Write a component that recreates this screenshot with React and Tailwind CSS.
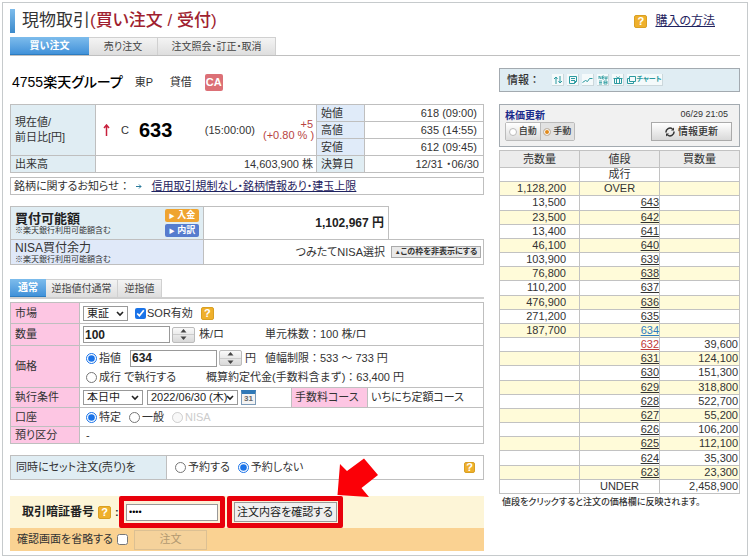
import React from "react";

const sells = [
  ["13,500", "643"],
  ["23,500", "642"],
  ["13,400", "641"],
  ["46,100", "640"],
  ["103,900", "639"],
  ["76,800", "638"],
  ["110,200", "637"],
  ["476,900", "636"],
  ["271,200", "635"],
  ["187,700", "634"],
];

const buys = [
  ["39,600", "632"],
  ["124,100", "631"],
  ["151,300", "630"],
  ["318,800", "629"],
  ["522,700", "628"],
  ["55,200", "627"],
  ["106,200", "626"],
  ["112,100", "625"],
  ["35,300", "624"],
  ["23,300", "623"],
];

const board = [
  { sell: "1,128,200", label: "OVER" },
  ...sells.map(([sell, price]) => ({ sell, price })),
  ...buys.map(([buy, price]) => ({ buy, price })),
  { label: "UNDER", buy: "2,458,900" },
];

function Help({ className = "h-[13px] w-[13px]" }) {
  return (
    <button
      type="button"
      aria-label="ヘルプ"
      className={`${className} flex shrink-0 items-center justify-center rounded-[2px] border border-[#d9a023] bg-[#efb02c] text-[11px] leading-none font-bold text-white`}
    >
      ?
    </button>
  );
}

function Tabs({ items, className = "" }) {
  return (
    <nav className={`flex text-[10px] ${className}`}>
      {items.map(([text, width], i) => (
        <a
          key={text}
          href="#"
          className={
            i === 0
              ? `${width} flex items-center justify-center border-b border-[#2c7cc0] bg-linear-to-b from-[#7dbcec] to-[#4192d9] font-bold text-white`
              : `${width} flex items-center justify-center border-t border-r border-[#d0d0d0] bg-linear-to-b from-[#f4f4f4] to-[#dedede] text-[#444]`
          }
        >
          {text}
        </a>
      ))}
    </nav>
  );
}

function Stepper({ name }) {
  return (
    <span className="flex h-4 w-[23px] shrink-0 flex-col overflow-hidden rounded-[2px] border border-[#bbb] bg-linear-to-b from-[#fafafa] to-[#d8d8d8]">
      <button type="button" aria-label={`${name}を増やす`} className="flex flex-1 items-center justify-center border-b border-[#ccc]">
        <svg width="7" height="4" viewBox="0 0 7 4"><path d="M3.5 0L6.5 3.5H.5z" fill="#444" /></svg>
      </button>
      <button type="button" aria-label={`${name}を減らす`} className="flex flex-1 items-center justify-center">
        <svg width="7" height="4" viewBox="0 0 7 4"><path d="M3.5 4L6.5 .5H.5z" fill="#444" /></svg>
      </button>
    </span>
  );
}

function Select({ id, label, option, className }) {
  return (
    <span className={`relative flex ${className}`}>
      <select id={id} aria-label={label} className="h-[15px] w-full appearance-none border border-[#999] bg-white pl-[3px] text-[11px] leading-none text-[#222]">
        <option>{option}</option>
      </select>
      <svg className="pointer-events-none absolute top-[5px] right-1" width="8" height="6" viewBox="0 0 8 6">
        <path d="M1 1l3 3 3-3" fill="none" stroke="#222" strokeWidth="1.6" />
      </svg>
    </span>
  );
}

function Radio({ name, text, checked, disabled }) {
  return (
    <label className={`flex items-center gap-0.5 ${disabled ? "text-[#ccc]" : ""}`}>
      <input type="radio" name={name} defaultChecked={checked} disabled={disabled} className="h-[11px] w-[11px] accent-[#1a73e8]" />
      {text}
    </label>
  );
}

function Row({ label, htmlFor, height, children, last }) {
  return (
    <div className={`flex ${height} ${last ? "" : "border-b border-[#bfbfbf]"}`}>
      <label htmlFor={htmlFor} className="flex w-[69px] shrink-0 items-center border-r border-[#bfbfbf] bg-[#fdc6e3] pl-1">
        {label}
      </label>
      <div className="min-w-0 flex-1 pl-[3px]">{children}</div>
    </div>
  );
}

const amount = "h-[17px] w-[87px] border border-[#999] bg-white pl-px text-[12px] font-bold leading-none text-[#222]";
const tile = "flex h-3 items-center justify-center border-r border-b border-[#ccd8dc] bg-[#f4fafb]";

function QuoteTable() {
  const cell = "border border-[#bfbfbf]";
  return (
    <table className="mt-[13px] w-full table-fixed border-collapse leading-4">
      <colgroup>
        <col className="w-[85px]" />
        <col />
        <col className="w-12" />
        <col className="w-[119px]" />
      </colgroup>
      <tbody>
        <tr className="h-[17px]">
          <th rowSpan="3" className={`${cell} bg-[#e0edf3] pl-1 text-left font-normal leading-[15px]`}>
            現在値/<br />前日比[円]
          </th>
          <td rowSpan="3" className={cell}>
            <div className="flex items-center pr-[3px] pl-[7px]">
              <svg width="7" height="12" viewBox="0 0 7 12"><path d="M3.5 1v11M1 4l2.5-3L6 4" fill="none" stroke="#c8203c" strokeWidth="1.5" /></svg>
              <span className="ml-[11px] text-[11px]">C</span>
              <span className="ml-2.5 text-[20px] font-bold text-black">633</span>
              <span className="flex-1 text-right">(15:00:00)</span>
              <span className="ml-2 w-[50px] text-right leading-[11px] text-[#b8443f]">+5<br />(+0.80&nbsp;%&nbsp;)</span>
            </div>
          </td>
          <th className={`${cell} bg-[#e0ebf9] pl-1 text-left font-normal`}>始値</th>
          <td className={`${cell} pr-1.5 text-right`}>618 (09:00)</td>
        </tr>
        <tr className="h-[17px]">
          <th className={`${cell} bg-[#e0ebf9] pl-1 text-left font-normal`}>高値</th>
          <td className={`${cell} pr-1.5 text-right`}>635 (14:55)</td>
        </tr>
        <tr className="h-[17px]">
          <th className={`${cell} bg-[#e0ebf9] pl-1 text-left font-normal`}>安値</th>
          <td className={`${cell} pr-1.5 text-right`}>612 (09:45)</td>
        </tr>
        <tr className="h-[17px]">
          <th className={`${cell} bg-[#e0edf3] pl-1 text-left font-normal`}>出来高</th>
          <td className={`${cell} pr-[3px] text-right`}>14,603,900 株</td>
          <th className={`${cell} bg-[#e0edf3] pl-1 text-left font-normal`}>決算日</th>
          <td className={`${cell} pr-1 text-right`}>12/31 ・06/30</td>
        </tr>
      </tbody>
    </table>
  );
}

function Funds() {
  return (
    <section className="mt-[11px]">
      <div className="mr-[95px] flex h-[33px] border border-b-0 border-[#bfbfbf]">
        <div className="flex w-[193px] shrink-0 items-center justify-between border-r border-[#bfbfbf] bg-[#e0edf3] pr-1 pl-1">
          <div>
            <div className="text-[13px] leading-[15px] font-bold text-[#222]">買付可能額</div>
            <div className="text-[8px] leading-[9px]">※楽天銀行利用可能額含む</div>
          </div>
          <div className="flex flex-col gap-0.5 text-[9px] leading-3 font-bold text-white">
            <button type="button" className="h-[13px] w-[34px] rounded-[2px] bg-[#efa431]"><span className="text-[6px]">▶</span> 入金</button>
            <button type="button" className="h-[13px] w-[34px] rounded-[2px] bg-[#567cce]"><span className="text-[6px]">▶</span> 内訳</button>
          </div>
        </div>
        <div className="flex flex-1 items-center justify-end pr-1 text-[12px] font-bold text-[#222]">1,102,967 円</div>
      </div>
      <div className="flex h-[26px] border border-[#bfbfbf]">
        <div className="w-[193px] shrink-0 border-r border-[#bfbfbf] bg-[#e0e9f9] pt-0.5 pl-1">
          <div className="text-[12px] leading-[13px]">NISA買付余力</div>
          <div className="text-[8px] leading-[9px]">※楽天銀行利用可能額含む</div>
        </div>
        <div className="flex flex-1 items-center justify-end gap-1.5 pr-0.5">
          つみたてNISA選択
          <button type="button" className="h-3 w-[90px] border border-[#aaa] bg-[#e9e9e9] text-[8px] leading-none font-bold whitespace-nowrap text-[#333]">
            <span className="text-[6px]">▲</span>この枠を非表示にする
          </button>
        </div>
      </div>
    </section>
  );
}

function OrderForm() {
  return (
    <section className="mt-[3px] border border-[#bfbfbf]">
      <Row label="市場" htmlFor="market" height="h-[21px]">
        <div className="flex h-full items-center">
          <Select id="market" option="東証" className="w-[45px]" />
          <label className="ml-[7px] flex items-center gap-px">
            <input type="checkbox" defaultChecked className="h-[11px] w-[11px] accent-[#1a73e8]" />
            SOR有効
          </label>
          <span className="ml-2 flex"><Help /></span>
        </div>
      </Row>
      <Row label="数量" htmlFor="quantity" height="h-[22px]">
        <div className="flex h-full items-center">
          <input id="quantity" defaultValue="100" className={amount} />
          <span className="ml-0.5 flex"><Stepper name="数量" /></span>
          <span className="ml-1 w-[66px]">株/ロ</span>
          <span className="[font-feature-settings:normal]">単元株数：100 株/ロ</span>
        </div>
      </Row>
      <Row label="価格" htmlFor="price" height="h-[42px]">
        <div className="flex h-[22px] items-center pt-0.5 pl-[3px]">
          <span className="flex w-11"><Radio name="type" text="指値" checked /></span>
          <input id="price" defaultValue="634" className={amount} />
          <span className="ml-0.5 flex"><Stepper name="価格" /></span>
          <span className="ml-[3px] w-5">円</span>
          <span className="[font-feature-settings:normal]">値幅制限：533 ～ 733 円</span>
        </div>
        <div className="flex h-[19px] items-center pl-[3px]">
          <span className="flex w-[120px]"><Radio name="type" text="成行 で執行する" /></span>
          <span className="[font-feature-settings:normal]">概算約定代金(手数料含まず)：63,400 円</span>
        </div>
      </Row>
      <Row label="執行条件" htmlFor="term" height="h-5">
        <div className="flex h-full items-center">
          <Select id="term" option="本日中" className="w-[60px]" />
          <Select label="期限" option="2022/06/30 (木)" className="ml-1 w-[91px]" />
          <button type="button" aria-label="カレンダー" className="ml-[3px] flex h-[15px] w-[15px] flex-col items-center border border-t-4 border-[#7d9bb8] border-t-[#2f78b7] bg-[#f3f3f3] text-[8px] leading-[10px] font-bold text-[#666]">
            31
          </button>
          <div className="ml-[35px] flex h-full w-[77px] items-center border-x border-[#bfbfbf] bg-[#fdc6e3] pl-[3px]">手数料コース</div>
          <span className="ml-[3px]">いちにち定額コース</span>
        </div>
      </Row>
      <Row label="口座" height="h-[19px]">
        <div className="flex h-full items-center gap-2 pl-[3px]">
          <Radio name="account" text="特定" checked />
          <Radio name="account" text="一般" />
          <Radio name="account" text="NISA" disabled />
        </div>
      </Row>
      <Row label="預り区分" height="h-4" last>
        <div className="flex h-full items-center pl-[3px]">-</div>
      </Row>
    </section>
  );
}

function Confirm() {
  return (
    <section className="mt-4">
      <div className="flex h-8 items-center bg-[#fdf5d7] pl-3">
        <label htmlFor="pin" className="w-[76px] text-[12px] font-bold text-[#222]">取引暗証番号</label>
        <Help />
        <span className="w-2 pl-1 font-bold">:</span>
        <div className="flex h-8 w-[106px] items-center justify-center rounded-[2px] border-[5px] border-[#e8000b] bg-[#fdf0d8]">
          <input id="pin" type="password" defaultValue="1234" className="h-[17px] w-[92px] border border-[#999] bg-white pl-0.5 text-[9px] leading-none text-black" />
        </div>
        <div className="relative ml-0.5 flex h-8 w-[116px] items-center justify-center rounded-[2px] border-[5px] border-[#e8000b] bg-[#fdf0d8]">
          <button type="button" className="h-5 w-[103px] border border-[#999] bg-[#efefef] text-[11px] text-[#222]">注文内容を確認する</button>
          <svg className="absolute -top-[43px] left-[105px]" width="42" height="42" viewBox="0 0 42 42">
            <path d="M.5 37L3 6L10 13L27 .5L41 17L24.500 30L32 39Z" fill="#fb0007" />
          </svg>
        </div>
      </div>
      <div className="flex h-[23px] items-center bg-[#fad292] pl-[7px]">
        <label className="flex items-center gap-1">
          確認画面を省略する
          <input type="checkbox" className="h-[11px] w-[11px]" />
        </label>
        <button type="button" disabled className="ml-1.5 h-5 w-[73px] border border-[#dcc093] bg-[#f5d29b] text-[#b39a72]">注文</button>
      </div>
    </section>
  );
}

function InfoBar() {
  const line = { fill: "none", stroke: "#2b9aa0", strokeWidth: 1 };
  return (
    <div className="mt-3 flex h-6 items-center gap-[3px] border border-[#a3aab0] bg-[#e0edf3] pl-[7px]">
      <span className="w-[42px] font-medium [font-feature-settings:normal]">情報：</span>
      <a href="#" aria-label="気配" className={`${tile} w-3`}>
        <svg width="10" height="10" viewBox="0 0 10 10" {...line}><path d="M3 9V2M1 4l2-2 1.5 2M7 1v7M5.5 6L7 8l2-2" /></svg>
      </a>
      <a href="#" aria-label="四季報" className={`${tile} w-3`}>
        <svg width="10" height="10" viewBox="0 0 10 10" {...line}><path d="M1.5 1.5h7v5l-2 2h-5zM3 3.5h4M3 5.5h4M6.500 8.500v-2h2" /></svg>
      </a>
      <a href="#" aria-label="推移" className={`${tile} w-3`}>
        <svg width="11" height="10" viewBox="0 0 11 10" {...line}><path d="M.5 7.500l3-2 2 1 2-3h3" /></svg>
      </a>
      <a href="#" aria-label="ニュース" className={`${tile} w-3`}>
        <svg width="10" height="10" viewBox="0 0 10 10" {...line} strokeWidth="0.8"><path d="M1 4V1l2 3V1M6 1H4.500v3H6M4.500 2.500H6M7 1v3h2V1M8 2v2M1 6h3M1 7.500h3M1 9h3M6 6h3v3H6zM6 7.500h3" /></svg>
      </a>
      <a href="#" aria-label="優待" className={`${tile} w-3`}>
        <svg width="10" height="10" viewBox="0 0 10 10" {...line}><path d="M.5 3.500h9M1.500 3.500v5h7v-5M3.500 3.500v5M6.500 3.500v5M5 3.500L3.500 1.500M5 3.500L6.500 1.500" /></svg>
      </a>
      <a href="#" className={`${tile} w-9 text-[7px] font-bold whitespace-nowrap text-[#2b9aa0]`}>
        <svg className="shrink-0" width="9" height="8" viewBox="0 0 9 8" {...line}><path d="M2.500 .5h6v5h-6zM2.500 2.500h-2v5h6v-2" /></svg>
        チャート
      </a>
    </div>
  );
}

const dot =
  "h-2 w-2 appearance-none rounded-full border border-[#bbb] bg-white checked:bg-[#e08a1c] checked:shadow-[inset_0_0_0_1px_white]";

function RefreshPanel() {
  return (
    <div className="mt-3 h-[43px] border border-[#a3aab0] bg-[#f1f1f1] pt-[3px] pr-[7px] pl-[5px]">
      <div className="flex h-[14px] items-center justify-between">
        <b className="text-[10px] text-[#1b2c8c]">株価更新</b>
        <span className="pr-1 text-[9px]">06/29 21:05</span>
      </div>
      <div className="flex items-center justify-between text-[9px] font-medium">
        <div className="flex h-[19px] w-[70px] rounded-[2px] border border-[#bbb]">
          <label className="flex flex-1 items-center justify-center gap-0.5 border-r border-[#bbb] bg-linear-to-b from-white to-[#dcdcdc]">
            <input type="radio" name="refresh" className={dot} />自動
          </label>
          <label className="flex flex-1 items-center justify-center gap-0.5 bg-[#e2e2e2]">
            <input type="radio" name="refresh" defaultChecked className={dot} />手動
          </label>
        </div>
        <button type="button" className="flex h-[19px] w-[81px] items-center justify-center gap-[3px] border border-[#aaa] bg-linear-to-b from-white to-[#d9d9d9] text-[10px] text-[#333]">
          <svg width="10" height="10" viewBox="0 0 10 10" fill="none" stroke="#333" strokeWidth="1.500"><path d="M1 5.500A4 4 0 0 1 7.500 2M9 4.500A4 4 0 0 1 2.500 8" /><path d="M6 3.500h3v-3zM4 6.500H1v3z" fill="#333" stroke="none" /></svg>
          情報更新
        </button>
      </div>
    </div>
  );
}

function Board() {
  const cell = "border border-[#c2c2c2] p-0";
  return (
    <table className="mt-[3px] h-[344px] w-full table-fixed border-collapse leading-[13px]">
      <thead>
        <tr className="h-[17px] bg-[#ececec]">
          <th className={`${cell} font-normal`}>売数量</th>
          <th className={`${cell} font-normal`}>値段</th>
          <th className={`${cell} font-normal`}>買数量</th>
        </tr>
      </thead>
      <tbody>
        <tr>
          <td className={cell} />
          <td className={`${cell} text-center`}>成行</td>
          <td className={cell} />
        </tr>
        {board.map((row, i) => (
          <tr key={row.price || row.label} className={i % 2 === 0 ? "bg-[#fffbd9]" : ""}>
            <td className={`${cell} pr-[13px] text-right`}>{row.sell}</td>
            {row.price ? (
              <td className={`${cell} text-right`}>
                <a
                  href="#"
                  className={
                    row.price === "634" ? "text-[#2f7cc0] underline" : row.price === "632" ? "text-[#c03a3a] underline" : "underline"
                  }
                >
                  {row.price}
                </a>
              </td>
            ) : (
              <td className={`${cell} text-center`}>{row.label}</td>
            )}
            <td className={`${cell} pr-px text-right`}>{row.buy}</td>
          </tr>
        ))}
      </tbody>
    </table>
  );
}

export default function App() {
  return (
    <div className="bg-white p-0.5 font-['Liberation_Sans','Noto_Sans_CJK_JP',sans-serif] text-[11px] text-[#333] [font-feature-settings:'palt']">
      <main className="border border-[#c6cacc] px-[7px] pt-1.5 pb-1">
        <header className="flex h-6 items-center">
          <span className="h-6 w-[5px] bg-linear-to-b from-[#7dbcec] to-[#3b8acb]" />
          <h1 className="ml-[7px] flex-1 text-[17px] leading-6 text-[#333]">
            現物取引<span className="font-medium text-[#a01f30]">(買い注文 / 受付)</span>
          </h1>
          <Help />
          <a href="#" className="mr-[25px] ml-2 text-[12px] text-[#1f2360] underline">購入の方法</a>
        </header>
        <div className="mt-1 border-b border-[#c0c0c0]">
          <Tabs className="h-[18px]" items={[["買い注文", "w-[79px]"], ["売り注文", "w-[69px]"], ["注文照会・訂正・取消", "w-[118px]"]]} />
        </div>
        <div className="flex gap-[15px]">
          <div className="min-w-0 flex-1">
            <div className="mt-[17px] flex h-[18px] items-center pl-0.5">
              <h2 className="text-[14px] font-medium text-black">4755楽天グループ</h2>
              <span className="ml-3 w-[35px]">東P</span>
              <span className="w-[35px]">貸借</span>
              <span className="flex h-[17px] w-[18px] items-center justify-center rounded-[2px] bg-[#dc7076] text-[11px] font-bold text-white">CA</span>
            </div>
            <QuoteTable />
            <p className="mt-1 flex h-[18px] items-center border border-[#bfbfbf] pl-[3px]">
              銘柄に関するお知らせ ：<span className="flex w-6 justify-center">
                <svg width="6" height="5" viewBox="0 0 6 5"><path d="M0 2.500h5M3 .5l2 2-2 2" fill="none" stroke="#2b7a9a" /></svg>
              </span>
              <a href="#" className="text-[#1f2360] underline">信用取引規制なし・銘柄情報あり・建玉上限</a>
            </p>
            <Funds />
            <div className="mt-[14px] border-b-2 border-[#cfcfcf]">
              <Tabs className="h-[18px]" items={[["通常", "w-9"], ["逆指値付通常", "w-[72px]"], ["逆指値", "w-11"]]} />
            </div>
            <OrderForm />
            <div className="mt-[11px] flex h-[25px] border border-[#bfbfbf]">
              <div className="flex w-[156px] shrink-0 items-center border-r border-[#bfbfbf] bg-[#e0edf3] pl-[5px]">同時にセット注文(売り)を</div>
              <div className="flex flex-1 items-center gap-2 pl-2">
                <Radio name="reserve" text="予約する" />
                <Radio name="reserve" text="予約しない" checked />
              </div>
              <span className="flex items-center pr-2"><Help className="h-[11px] w-[11px]" /></span>
            </div>
            <Confirm />
          </div>
          <aside className="w-[241px] shrink-0">
            <InfoBar />
            <RefreshPanel />
            <Board />
            <p className="mt-0.5 pl-[3px] text-[9px] leading-[13px] font-medium">値段をクリックすると注文の価格欄に反映されます。</p>
          </aside>
        </div>
      </main>
    </div>
  );
}
